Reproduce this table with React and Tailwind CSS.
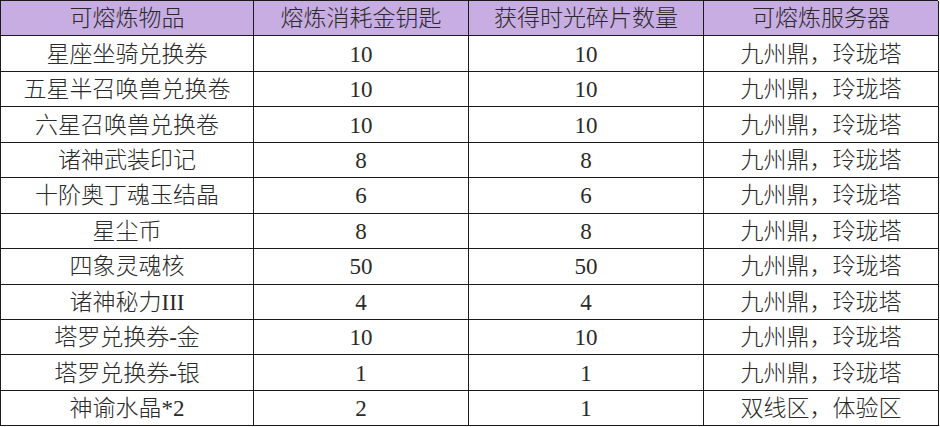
import React from "react";

const rows = [
  ["星座坐骑兑换券", "10", "10", "九州鼎，玲珑塔"],
  ["五星半召唤兽兑换卷", "10", "10", "九州鼎，玲珑塔"],
  ["六星召唤兽兑换卷", "10", "10", "九州鼎，玲珑塔"],
  ["诸神武装印记", "8", "8", "九州鼎，玲珑塔"],
  ["十阶奥丁魂玉结晶", "6", "6", "九州鼎，玲珑塔"],
  ["星尘币", "8", "8", "九州鼎，玲珑塔"],
  ["四象灵魂核", "50", "50", "九州鼎，玲珑塔"],
  ["诸神秘力III", "4", "4", "九州鼎，玲珑塔"],
  ["塔罗兑换券-金", "10", "10", "九州鼎，玲珑塔"],
  ["塔罗兑换券-银", "1", "1", "九州鼎，玲珑塔"],
  ["神谕水晶*2", "2", "1", "双线区，体验区"],
];

const header = ["可熔炼物品", "熔炼消耗金钥匙", "获得时光碎片数量", "可熔炼服务器"];

function Cell({ children, head }) {
  return (
    <div
      className={`flex h-[35.45px] items-center justify-center border-r border-b border-[#1a1a1a] pt-[1px] text-[23px] font-light leading-none text-[#2a2a2a] ${
        head ? "bg-[#c8ade2]" : "bg-white"
      }`}
    >
      {children}
    </div>
  );
}

export default function App() {
  return (
    <div
      className="h-[427px] w-[940px] overflow-hidden bg-white"
      style={{ fontFamily: '"Liberation Serif", "Noto Sans CJK SC", serif' }}
    >
      <div className="grid w-[938px] grid-cols-[253px_215px_235px_235px] border-l border-t border-[#1a1a1a]">
        {header.map((h) => (
          <Cell key={h} head>
            {h}
          </Cell>
        ))}
        {rows.map((r, i) =>
          r.map((c, j) => <Cell key={i + "-" + j}>{c}</Cell>)
        )}
      </div>
    </div>
  );
}
